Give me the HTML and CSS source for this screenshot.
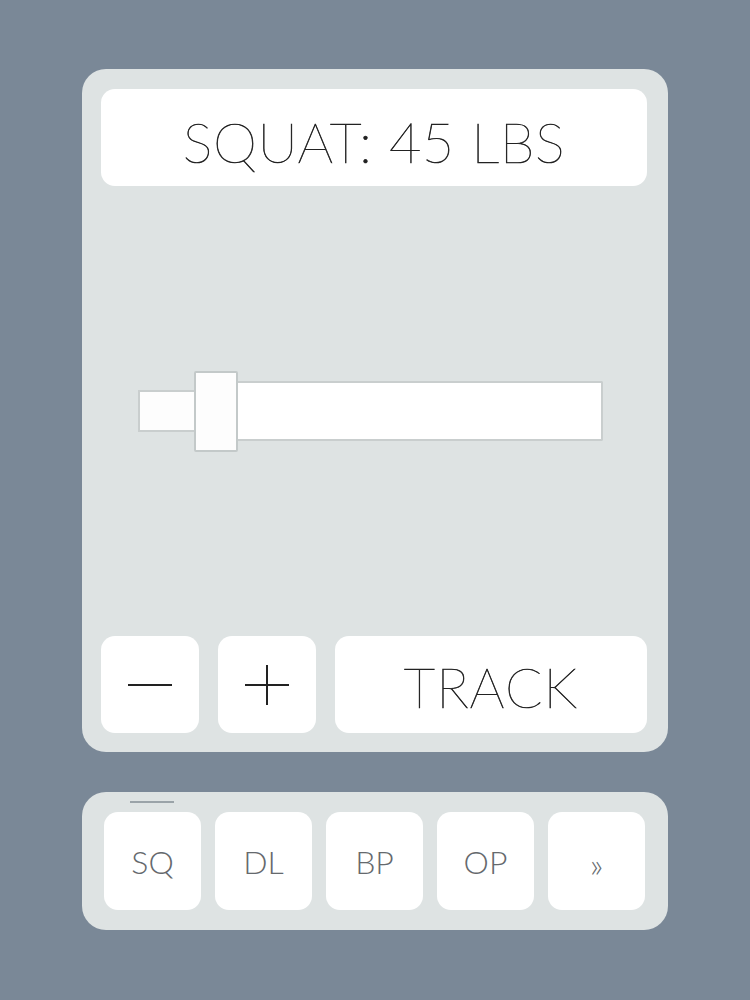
FILE: index.html
```html
<!DOCTYPE html>
<html lang="en">
<head>
  <meta charset="UTF-8">
  <title>Lift Tracker</title>
  <link rel="stylesheet" href="styles.css">
</head>
<body>

  <div class="panel">
    <div class="weight-label">SQUAT: 45 LBS</div>

    <div class="slider">
      <div class="slider-fill"></div>
      <div class="slider-thumb"></div>
      <div class="slider-track"></div>
    </div>

    <div class="controls">
      <button class="step">
        <svg width="44" height="44" viewBox="0 0 44 44"><line x1="0" y1="22" x2="44" y2="22" stroke="#222" stroke-width="2"/></svg>
      </button>
      <button class="step">
        <svg width="44" height="44" viewBox="0 0 44 44"><line x1="0" y1="22" x2="44" y2="22" stroke="#222" stroke-width="2"/><line x1="22" y1="2" x2="22" y2="42" stroke="#222" stroke-width="2"/></svg>
      </button>
      <button class="track">TRACK</button>
    </div>
  </div>

  <div class="tabs">
    <button class="tab active">SQ</button>
    <button class="tab">DL</button>
    <button class="tab">BP</button>
    <button class="tab">OP</button>
    <button class="tab more">&raquo;</button>
  </div>

</body>
</html>
```
FILE: styles.css
```css
body {
  font-family: "Lato", "Open Sans", sans-serif;
  font-weight: 200;
  background: #7a8897;
  margin: 0;
  padding: 0;
}

button {
  font-family: inherit;
  font-weight: inherit;
  border: none;
  background: #fff;
  padding: 0;
  cursor: pointer;
}

.panel {
  width: 586px;
  height: 683px;
  box-sizing: border-box;
  margin: 69px auto 0;
  padding: 20px 21px 19px 19px;
  background: #dee3e3;
  border-radius: 24px;
  display: flex;
  flex-direction: column;
}

.weight-label {
  height: 97px;
  background: #fff;
  border-radius: 14px;
  display: flex;
  align-items: center;
  justify-content: center;
  padding-top: 7px;
  box-sizing: border-box;
  font-size: 56px;
  color: #222;
  -webkit-text-stroke: 0.6px #222;
  letter-spacing: 0.5px;
}

.slider {
  flex: 1;
  display: flex;
  align-items: center;
  padding-left: 37px;
}

.slider-fill {
  width: 56px;
  height: 42px;
  box-sizing: border-box;
  background: #fdfdfd;
  border: 2px solid #c9cece;
  border-right: none;
}

.slider-thumb {
  width: 44px;
  height: 81px;
  box-sizing: border-box;
  background: #fdfdfd;
  border: 2px solid #c3c9c9;
  border-radius: 2px;
}

.slider-track {
  width: 365px;
  height: 60px;
  box-sizing: border-box;
  background: #fff;
  border: 2px solid #c9cece;
  border-left: none;
  border-radius: 0 2px 2px 0;
}

.controls {
  display: flex;
  gap: 19px;
  height: 97px;
}

.controls button {
  border-radius: 14px;
  display: flex;
  align-items: center;
  justify-content: center;
}

.step {
  width: 98px;
}

.track {
  flex: 1;
  padding-top: 4px;
  font-size: 55px;
  color: #222;
  -webkit-text-stroke: 0.6px #222;
  letter-spacing: 1px;
}

.tabs {
  width: 586px;
  box-sizing: border-box;
  margin: 40px auto 0;
  padding: 20px 22px;
  background: #dee3e3;
  border-radius: 24px;
  display: flex;
  gap: 14px;
}

.tab {
  position: relative;
  width: 97px;
  height: 98px;
  border-radius: 14px;
  font-size: 32px;
  font-weight: 300;
  color: #65696d;
}

.tab.active::before {
  content: "";
  position: absolute;
  top: -11px;
  left: 26px;
  width: 44px;
  height: 2px;
  background: #9aa3a8;
}

.tab.more {
  font-size: 34px;
  padding-top: 4px;
}
```
